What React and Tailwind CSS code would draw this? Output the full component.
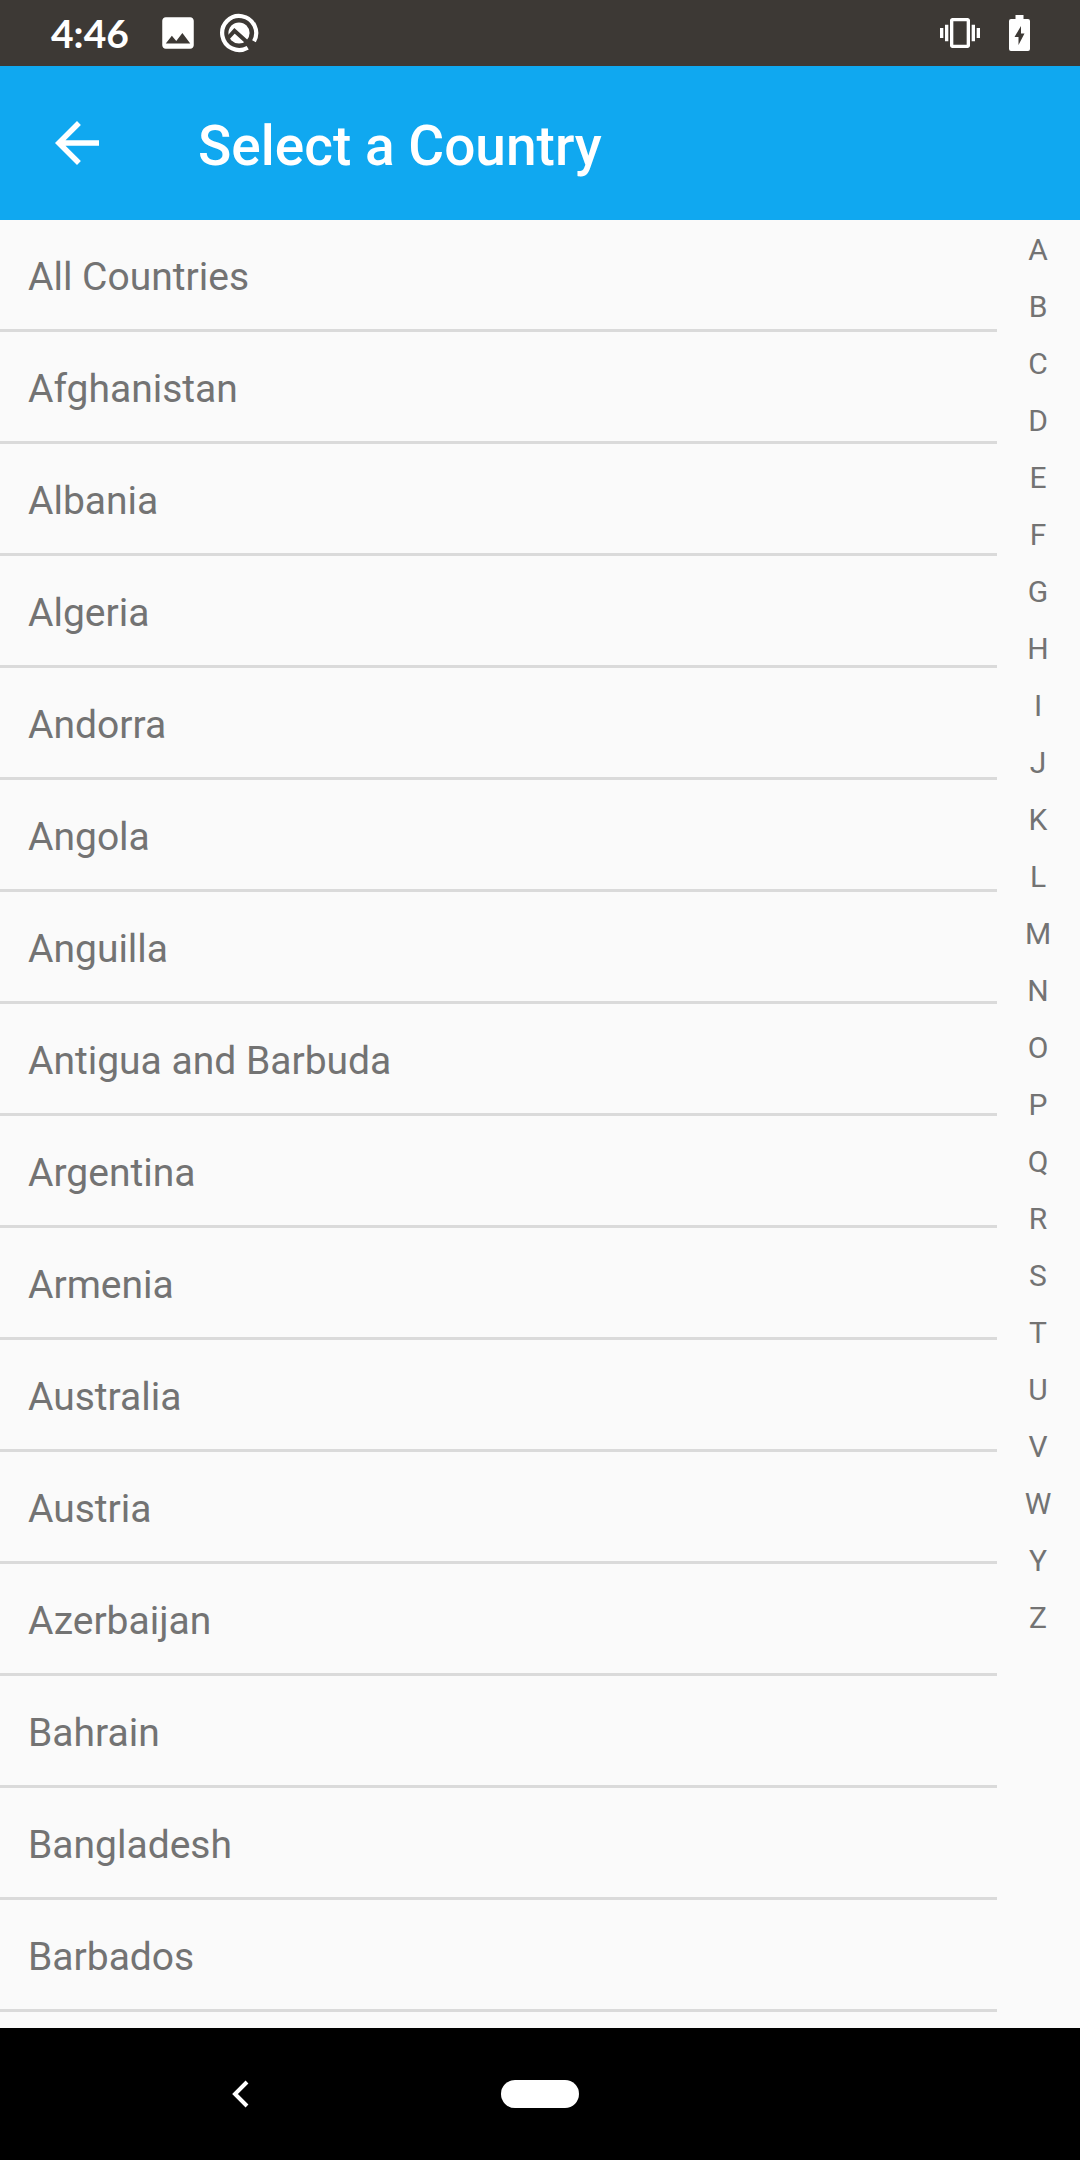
import React from 'react';

const COUNTRIES = [
  'All Countries',
  'Afghanistan',
  'Albania',
  'Algeria',
  'Andorra',
  'Angola',
  'Anguilla',
  'Antigua and Barbuda',
  'Argentina',
  'Armenia',
  'Australia',
  'Austria',
  'Azerbaijan',
  'Bahrain',
  'Bangladesh',
  'Barbados'
];

// No country starts with X
const LETTERS = 'ABCDEFGHIJKLMNOPQRSTUVWYZ'.split('');

function StatusBar() {
  return (
    <div className="flex h-[66px] items-center justify-between bg-[#3d3935] pr-12 pl-[51px] text-white">
      <div className="flex items-center">
        <span className="font-['Lato',sans-serif] text-[39px] leading-[66px] font-bold">4:46</span>
        <svg viewBox="0 0 24 24" className="ml-7 size-[42px]" fill="currentColor" aria-hidden="true">
          <path d="M21 19V5c0-1.1-.9-2-2-2H5c-1.1 0-2 .9-2 2v14c0 1.1.9 2 2 2h14c1.1 0 2-.9 2-2zM8.5 13.5l2.5 3.01L14.5 12l4.5 6H5l3.5-4.5z" />
        </svg>
        <svg viewBox="0 0 40 40" className="ml-5 size-10" aria-hidden="true">
          <path d="M28.7 34.7A17 17 0 1 1 35 28.3" fill="none" stroke="currentColor" strokeWidth="4.2" />
          <circle cx="20" cy="20" r="10.6" fill="currentColor" />
          <path d="M9 25l6.5-7.2L34 34.5" fill="none" stroke="#3d3935" strokeWidth="4" />
        </svg>
      </div>
      <div className="flex items-center gap-7">
        <svg viewBox="0 0 24 24" className="size-10" fill="currentColor" aria-hidden="true">
          <path d="M0 15h2V9H0v6zm3 2h2V7H3v10zm19-8v6h2V9h-2zm-3 8h2V7h-2v10zM16.5 3h-9C6.67 3 6 3.67 6 4.5v15c0 .83.67 1.5 1.5 1.5h9c.83 0 1.5-.67 1.5-1.5v-15c0-.83-.67-1.5-1.5-1.5zM16 19H8V5h8v14z" />
        </svg>
        <svg viewBox="0 0 24 36" className="h-9 w-6" fill="currentColor" aria-hidden="true">
          <path
            fillRule="evenodd"
            d="M7.500 0h8v4H20a2 2 0 0 1 2 2v28a2 2 0 0 1-2 2H3a2 2 0 0 1-2-2V6a2 2 0 0 1 2-2h4.500zM13 11L6.500 22h4v8l6-11.500H13z"
          />
        </svg>
      </div>
    </div>
  );
}

function Header() {
  return (
    <header className="flex h-[154px] items-center bg-[#10a8f0] px-11 text-white">
      <button type="button" aria-label="Back">
        <svg viewBox="0 0 24 24" className="size-[66px]" fill="currentColor">
          <path d="M20 11H7.83l5.59-5.59L12 4l-8 8 8 8 1.41-1.41L7.83 13H20v-2z" />
        </svg>
      </button>
      <h1 className="ml-[88px] pt-1.5 text-[55px] leading-[64px] font-medium">Select a Country</h1>
    </header>
  );
}

function CountryList() {
  return (
    <ul className="flex-1">
      {COUNTRIES.map((country) => (
        <li key={country} className="border-b-3 border-[#dadada]">
          <button type="button" className="block h-[109px] w-full px-7 pt-1 text-left text-[39px] leading-[48px]">
            {country}
          </button>
        </li>
      ))}
    </ul>
  );
}

function LetterIndex() {
  return (
    <nav aria-label="Jump to letter" className="flex w-[83px] flex-col pt-px pr-px">
      {LETTERS.map((letter) => (
        <button key={letter} type="button" className="h-[57px] text-[30px] leading-[57px]">
          {letter}
        </button>
      ))}
    </nav>
  );
}

function NavigationBar() {
  return (
    <div className="grid h-[132px] grid-cols-[1fr_auto_1fr] items-center bg-black text-white">
      <button type="button" aria-label="Back" className="mr-5 justify-self-center">
        <svg viewBox="0 0 30 30" className="size-[30px]" fill="none" stroke="currentColor" strokeWidth="4">
          <path d="M21 3L9 15l12 12" />
        </svg>
      </button>
      <button type="button" aria-label="Home" className="h-7 w-[78px] rounded-full bg-white" />
    </div>
  );
}

export default function App() {
  return (
    <div className="flex min-h-screen flex-col bg-[#fafafa] font-['Roboto',sans-serif] text-[#737373]">
      <StatusBar />
      <Header />
      <main className="flex flex-1 pb-4">
        <CountryList />
        <LetterIndex />
      </main>
      <NavigationBar />
    </div>
  );
}
